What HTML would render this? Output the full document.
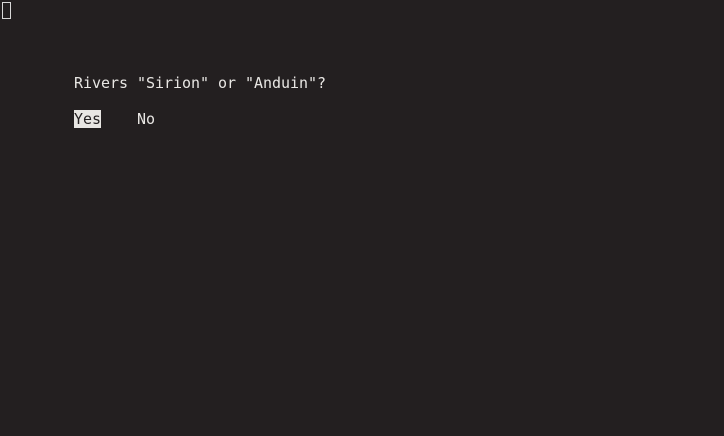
<!DOCTYPE html>
<html><head><style>
html,body{margin:0;padding:0;background:#231f20;width:724px;height:436px;overflow:hidden}
.t{position:absolute;left:74px;font:15px/18px "DejaVu Sans Mono","Liberation Mono",monospace;color:#e8e6e3;white-space:pre;height:18px;letter-spacing:-0.03px}
.c{position:absolute;left:2px;top:2px;width:7px;height:15px;border:1px solid #d8d8d8}
.h{background:#e8e6e3;color:#231f20}
</style></head><body>
<div class="c"></div>
<div class="t" style="top:74px">Rivers "Sirion" or "Anduin"?</div>
<div class="t" style="top:110px"><span class="h">Yes</span>    No</div>
</body></html>
